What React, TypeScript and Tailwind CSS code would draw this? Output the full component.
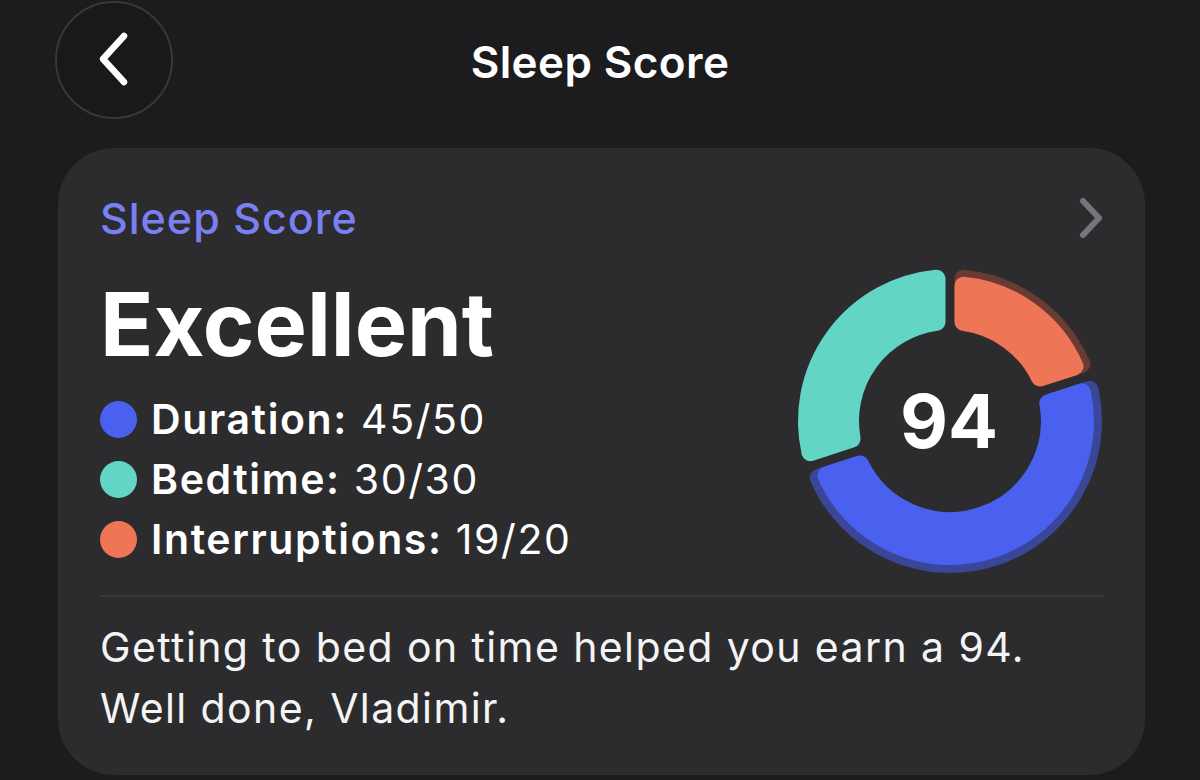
import React from "react";

const CX = 157;
const CY = 155;

function pt(theta: number, along: number, off: number) {
  const t = (theta * Math.PI) / 180;
  const ux = Math.sin(t);
  const uy = -Math.cos(t);
  const nx = Math.cos(t);
  const ny = Math.sin(t);
  return [CX + along * ux + off * nx, CY + along * uy + off * ny];
}

function sector(ts: number, te: number, ri: number, ro: number, c: number, g: number) {
  const Ro = ro - c;
  const Ri = ri + c;
  const d = g / 2 + c;
  const ao = Math.sqrt(Ro * Ro - d * d);
  const ai = Math.sqrt(Ri * Ri - d * d);
  const os = pt(ts, ao, d);
  const oe = pt(te, ao, -d);
  const ie = pt(te, ai, -d);
  const is = pt(ts, ai, d);
  const large = te - ts > 180 ? 1 : 0;
  const f = (p: number[]) => `${p[0].toFixed(2)} ${p[1].toFixed(2)}`;
  return `M ${f(os)} A ${Ro} ${Ro} 0 ${large} 1 ${f(oe)} L ${f(ie)} A ${Ri} ${Ri} 0 ${large} 0 ${f(is)} Z`;
}

function Seg({ ts, te, ri, ro, color }: { ts: number; te: number; ri: number; ro: number; color: string }) {
  const c = 9;
  return (
    <path
      d={sector(ts, te, ri, ro, c, 9)}
      fill={color}
      stroke={color}
      strokeWidth={c * 2}
      strokeLinejoin="round"
    />
  );
}

function Ring() {
  const RI = 91;
  const RO = 152;
  return (
    <svg width="310" height="310" viewBox="0 0 310 310" className="shrink-0">
      {/* Interruptions 19/20 */}
      <Seg ts={0} te={72} ri={RI} ro={RO} color="#6a3b32" />
      <Seg ts={0} te={72} ri={RI} ro={145} color="#ee7657" />
      {/* Duration 45/50 */}
      <Seg ts={72} te={252} ri={RI} ro={RO} color="#3a4697" />
      <Seg ts={72} te={252} ri={RI} ro={144} color="#4a61f0" />
      {/* Bedtime 30/30 */}
      <Seg ts={252} te={360} ri={RI} ro={RO} color="#63d5c5" />
      <text
        x={CX - 1}
        y={CY + 27}
        textAnchor="middle"
        fill="#ffffff"
        fontSize="74"
        fontWeight="700"
        fontFamily="Inter, 'Noto Sans', sans-serif"
      >
        94
      </text>
    </svg>
  );
}

function LegendRow({ color, label, value }: { color: string; label: string; value: string }) {
  return (
    <div className="flex h-[60px] items-center">
      <span className="mr-[14px] h-[37px] w-[37px] shrink-0 rounded-full" style={{ backgroundColor: color }} />
      <span className="text-[41px] leading-[60px] tracking-[1.6px] text-white">
        <span className="font-semibold">{label}:</span> <span className="font-normal">{value}</span>
      </span>
    </div>
  );
}

export default function App() {
  return (
    <div
      className="h-[780px] w-[1200px] overflow-hidden bg-[#1c1c1e]"
      style={{ fontFamily: "Inter, 'Noto Sans', sans-serif" }}
    >
      <div className="relative flex h-[120px] items-center justify-center">
        <button className="absolute left-[55px] top-[1px] flex h-[118px] w-[118px] items-center justify-center rounded-full border-2 border-[#38383b] bg-[#19191b]">
          <svg width="40" height="60" viewBox="0 0 40 60">
            <path d="M30 6 L9 29 L30 52" fill="none" stroke="#ffffff" strokeWidth="6.5" strokeLinecap="round" strokeLinejoin="round" />
          </svg>
        </button>
        <h1 className="mt-[4px] text-[44px] font-semibold leading-[44px] tracking-[0.4px] text-white">Sleep Score</h1>
      </div>

      <div className="ml-[58px] mr-[55px] mt-[28px] h-[627px] rounded-[56px] bg-[#2c2c2e] px-[42px] pt-[48px]">
        <div className="flex items-center justify-between">
          <div className="text-[43px] font-medium leading-[44px] tracking-[1px] text-[#7a7ff2]">Sleep Score</div>
          <svg width="30" height="44" viewBox="0 0 30 44" className="mr-[-2px]">
            <path d="M8 5 L24 22 L8 39" fill="none" stroke="#75757a" strokeWidth="6" strokeLinecap="round" strokeLinejoin="round" />
          </svg>
        </div>

        <div className="mt-[26px] flex items-start justify-between">
          <div className="flex flex-col pt-[15px]">
            <div className="text-[88px] font-bold leading-[86px] text-white">Excellent</div>
            <div className="mt-[22px] flex flex-col">
              <LegendRow color="#4a61f0" label="Duration" value="45/50" />
              <LegendRow color="#63d5c5" label="Bedtime" value="30/30" />
              <LegendRow color="#ee7657" label="Interruptions" value="19/20" />
            </div>
          </div>
          <Ring />
        </div>

        <div className="mt-[19px] h-[2px] bg-[#3a3a3d]" />

        <p className="mt-[20px] text-[41px] font-normal leading-[61px] tracking-[1.4px] text-[#f4f4f5]">
          Getting to bed on time helped you earn a 94.
          <br />
          Well done, Vladimir.
        </p>
      </div>
    </div>
  );
}
